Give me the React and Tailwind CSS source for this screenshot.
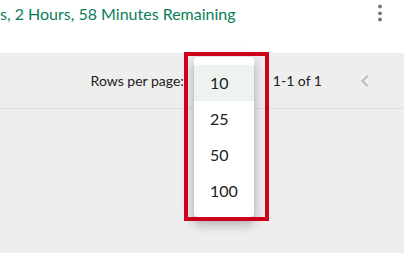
import React from "react";

export default function App() {
  return (
    <div
      className="relative w-[404px] h-[253px] overflow-hidden bg-[#eeeeee] text-[#212121]"
      style={{ fontFamily: "Lato, 'Noto Sans', sans-serif" }}
    >
      {/* header */}
      <div className="h-[53px] bg-white flex items-start justify-between">
        <div className="pt-[2px] text-[16px] leading-[24px] text-[#0b7d57] whitespace-nowrap">
          s, 2 Hours, 58 Minutes Remaining
        </div>
        <button className="mr-[12px] mt-[1px] w-[24px] h-[24px] flex items-center justify-center text-[#757575]">
          <svg width="24" height="24" viewBox="0 0 24 24" fill="currentColor">
            <circle cx="12" cy="5.5" r="1.9" />
            <circle cx="12" cy="12.3" r="1.9" />
            <circle cx="12" cy="18.5" r="1.9" />
          </svg>
        </button>
      </div>

      {/* pagination toolbar */}
      <div className="h-[56px] border-b border-[#dcdcdc] flex items-center justify-end pr-[19px] text-[14px]">
        <span className="whitespace-nowrap">Rows per page:</span>
        <div className="ml-2 mr-8 w-[49px] h-[24px]" />
        <span className="whitespace-nowrap">1-1 of 1</span>
        <button className="ml-[23px] w-10 h-10 flex items-center justify-center text-[#bdbdbd]">
          <svg width="24" height="24" viewBox="0 0 24 24" fill="currentColor">
            <path d="M15.41 7.41 14 6l-6 6 6 6 1.41-1.41L10.83 12z" />
          </svg>
        </button>
      </div>

      {/* dropdown menu */}
      <div className="absolute left-[194px] top-[57px] w-[60px] h-[160px] bg-white rounded-[4px] py-2 shadow-[0px_5px_5px_-3px_rgba(0,0,0,0.2),0px_8px_10px_1px_rgba(0,0,0,0.14),0px_3px_14px_2px_rgba(0,0,0,0.12)]">
        <div className="h-[36px] pl-4 flex items-center text-[16px] bg-[#edf4f0]">10</div>
        <div className="h-[36px] pl-4 flex items-center text-[16px]">25</div>
        <div className="h-[36px] pl-4 flex items-center text-[16px]">50</div>
        <div className="h-[36px] pl-4 flex items-center text-[16px]">100</div>
      </div>

      {/* red highlight frame */}
      <div className="absolute left-[184px] top-[52px] w-[85px] h-[169px] border-4 border-[#d0021b] pointer-events-none" />
    </div>
  );
}
